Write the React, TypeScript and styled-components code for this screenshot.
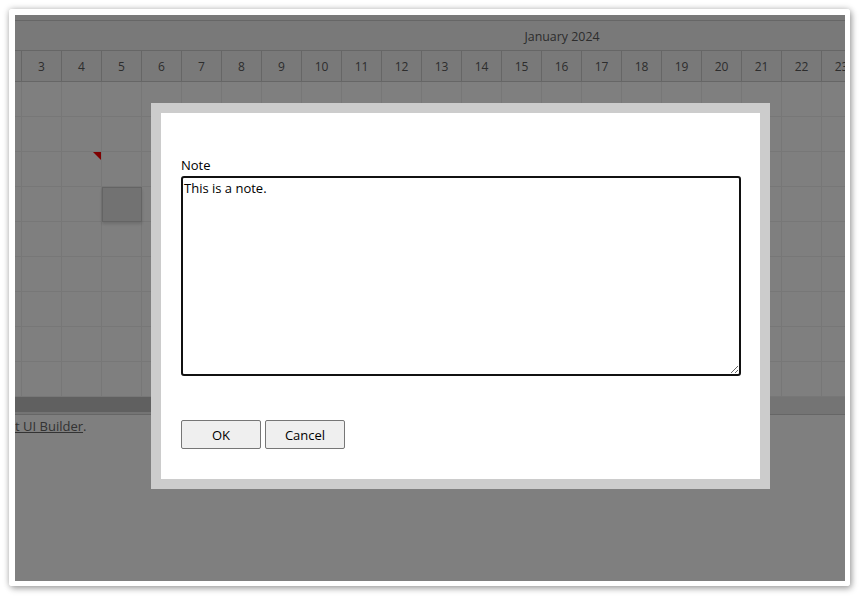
import React, { useEffect, useRef } from 'react';
import styled, { createGlobalStyle } from 'styled-components';

const DAYS = Array.from({ length: 31 }, (_, i) => i + 1);
const ROWS = 9;

// cells that carry something on the timeline: [row, day]
const MARKER = { row: 2, day: 4 };
const EVENT = { row: 3, day: 5 };

const GlobalStyle = createGlobalStyle`
  html, body {
    margin: 0;
    background: #ffffff;
  }
  body {
    font-family: "Segoe UI", "Open Sans", "Liberation Sans", sans-serif;
    font-size: 13px;
    color: #333;
  }
`;

const App = () => {
  const noteRef = useRef<HTMLTextAreaElement>(null);

  useEffect(() => {
    const el = noteRef.current;
    if (el) {
      el.focus();
      el.setSelectionRange(el.value.length, el.value.length);
    }
  }, []);

  return (
    <>
      <GlobalStyle />
      <Frame>
        <Window>
          <Viewport>
            <Scheduler>
              <Timeline>
                <TopStrip />
                <MonthRow>January 2024</MonthRow>
                <DayRow>
                  {DAYS.map((d) => (
                    <DayCell key={d}>{d}</DayCell>
                  ))}
                </DayRow>
                {Array.from({ length: ROWS }, (_, r) => (
                  <GridRow key={r}>
                    {DAYS.map((d) => (
                      <GridCell key={d}>
                        {r === MARKER.row && d === MARKER.day && <Marker />}
                        {r === EVENT.row && d === EVENT.day && <EventBox />}
                      </GridCell>
                    ))}
                  </GridRow>
                ))}
              </Timeline>
              <ScrollTrack>
                <ScrollThumb />
              </ScrollTrack>
            </Scheduler>
            <Footer>
              Generated using <FooterLink href="#">DayPilot UI Builder</FooterLink>.
            </Footer>

            <Backdrop />
            <Modal>
              <ModalBody>
                <FieldLabel htmlFor="note">Note</FieldLabel>
                <NoteInput id="note" ref={noteRef} defaultValue="This is a note." />
                <Buttons>
                  <DialogButton type="button">OK</DialogButton>
                  <DialogButton type="button">Cancel</DialogButton>
                </Buttons>
              </ModalBody>
            </Modal>
          </Viewport>
        </Window>
      </Frame>
    </>
  );
};

const Frame = styled.div`
  padding: 9px 10px 10px 9px;
`;

const Window = styled.div`
  width: 830px;
  height: 566px;
  border-style: solid;
  border-color: #ffffff;
  border-width: 6px 5px 5px 6px;
  border-radius: 3px;
  box-shadow: 0 0 6px rgba(0, 0, 0, 0.25), 2px 3px 6px rgba(0, 0, 0, 0.25);
`;

const Viewport = styled.div`
  position: relative;
  width: 830px;
  height: 566px;
  overflow: hidden;
  background: #ffffff;
  display: flex;
  flex-direction: column;
`;

const Scheduler = styled.div`
  display: flex;
  flex-direction: column;
  overflow: hidden;
`;

const Timeline = styled.div`
  width: 1240px;
  margin-left: -73px;
  display: flex;
  flex-direction: column;
`;

const TopStrip = styled.div`
  height: 5px;
  background: #f3f3f3;
  border-bottom: 1px solid #cccccc;
`;

const MonthRow = styled.div`
  height: 29px;
  line-height: 31px;
  text-align: center;
  background: #f3f3f3;
  border-bottom: 1px solid #cccccc;
  color: #5a5a5a;
  font-size: 12.4px;
`;

const DayRow = styled.div`
  display: flex;
  height: 30px;
  background: #f3f3f3;
  border-bottom: 1px solid #cccccc;
`;

const DayCell = styled.div`
  box-sizing: border-box;
  width: 40px;
  flex: none;
  border-right: 1px solid #cccccc;
  display: flex;
  align-items: center;
  justify-content: center;
  color: #5a5a5a;
  font-size: 12px;
`;

const GridRow = styled.div`
  display: flex;
  height: 34px;
  border-bottom: 1px solid #eeeeee;
`;

const GridCell = styled.div`
  position: relative;
  box-sizing: border-box;
  width: 40px;
  flex: none;
  border-right: 1px solid #eeeeee;
`;

const Marker = styled.div`
  position: absolute;
  top: 0;
  right: 0;
  width: 0;
  height: 0;
  border-top: 8px solid #ff0000;
  border-left: 8px solid transparent;
`;

const EventBox = styled.div`
  position: absolute;
  top: 0;
  left: 0;
  width: 40px;
  height: 35px;
  box-sizing: border-box;
  background: #e4e4e4;
  border: 1px solid #c8c8c8;
  box-shadow: 0 2px 3px rgba(0, 0, 0, 0.15);
  z-index: 1;
`;

const ScrollTrack = styled.div`
  height: 17px;
  background: #e8e8e8;
  border-bottom: 1px solid #cccccc;
`;

const ScrollThumb = styled.div`
  width: 320px;
  height: 15px;
  background: #c0c0c0;
`;

const Footer = styled.div`
  margin: 1px 0 0 -149px;
  white-space: nowrap;
  color: #666;
  line-height: 20px;
`;

const FooterLink = styled.a`
  color: #666;
  text-decoration: underline;
`;

const Backdrop = styled.div`
  position: absolute;
  inset: 0;
  background: rgba(0, 0, 0, 0.5);
  z-index: 5;
`;

const Modal = styled.div`
  position: absolute;
  left: 136px;
  top: 88px;
  width: 599px;
  height: 366px;
  border: 10px solid #cccccc;
  background: #ffffff;
  z-index: 6;
`;

const ModalBody = styled.div`
  padding: 43px 19px 0 20px;
  display: flex;
  flex-direction: column;
  align-items: flex-start;
`;

const FieldLabel = styled.label`
  display: block;
  line-height: 18px;
  margin-bottom: 2px;
  color: #000;
`;

const NoteInput = styled.textarea`
  box-sizing: border-box;
  width: 560px;
  height: 200px;
  margin: 0;
  padding: 1px 1px;
  border: 2px solid #111;
  border-radius: 3px;
  outline: none;
  font-family: inherit;
  font-size: 13px;
  line-height: 18px;
  color: #000;
  caret-color: #000;
`;

const Buttons = styled.div`
  display: flex;
  gap: 4px;
  margin-top: 44px;
`;

const DialogButton = styled.button`
  width: 80px;
  height: 29px;
  margin: 0;
  padding: 0;
  background: #efefef;
  border: 1px solid #767676;
  border-radius: 2px;
  font-family: inherit;
  font-size: 13px;
  color: #000;
`;

export default App;
